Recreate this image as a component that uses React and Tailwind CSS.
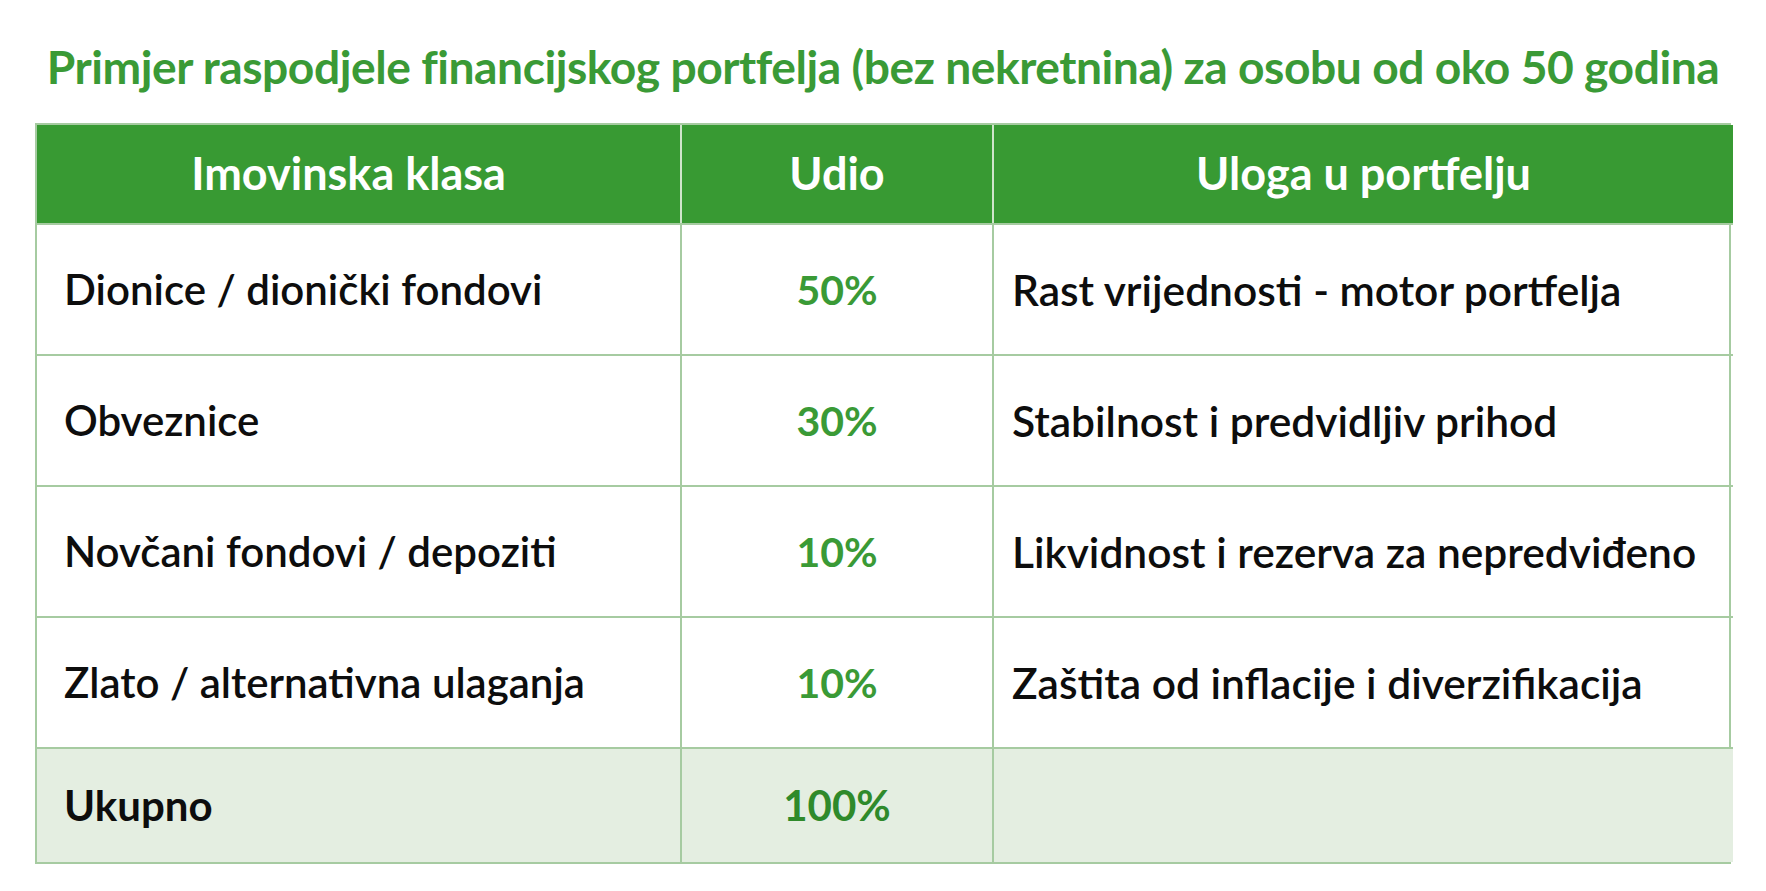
import React from "react";

const rows = [
  { a: "Dionice / dionički fondovi", b: "50%", c: "Rast vrijednosti - motor portfelja" },
  { a: "Obveznice", b: "30%", c: "Stabilnost i predvidljiv prihod" },
  { a: "Novčani fondovi / depoziti", b: "10%", c: "Likvidnost i rezerva za nepredviđeno" },
  { a: "Zlato / alternativna ulaganja", b: "10%", c: "Zaštita od inflacije i diverzifikacija" },
];

export default function App() {
  return (
    <div
      className="w-[1766px] h-[891px] bg-white flex flex-col items-center overflow-hidden"
      style={{ fontFamily: "Lato, 'Open Sans', sans-serif" }}
    >
      <h1 className="mt-[36px] h-[60px] text-[46.2px] leading-[60px] font-bold text-[#3a9a36] tracking-[-0.01em] whitespace-nowrap">
        Primjer raspodjele financijskog portfelja (bez nekretnina) za osobu od oko 50 godina
      </h1>
      <div className="mt-[27px] w-[1696px] grid grid-cols-[645px_312px_739px] border-2 border-[#a6cba1]">
        <div className="h-[98px] bg-[#389a33] flex items-center justify-center text-white text-[45px] font-bold border-r-2 border-[#cfe5cb] pr-[20px]">
          Imovinska klasa
        </div>
        <div className="h-[98px] bg-[#389a33] flex items-center justify-center text-white text-[45px] font-bold border-r-2 border-[#cfe5cb]">
          Udio
        </div>
        <div className="h-[98px] bg-[#389a33] flex items-center justify-center text-white text-[45px] font-bold">
          Uloga u portfelju
        </div>
        {rows.map((r, i) => (
          <React.Fragment key={i}>
            <div className="h-[131px] flex items-center pl-[27px] text-[42px] font-semibold text-[#0d0d0d] border-t-2 border-r-2 border-[#a6cba1]">
              {r.a}
            </div>
            <div className="h-[131px] flex items-center justify-center text-[41px] font-bold text-[#3a9a36] border-t-2 border-r-2 border-[#a6cba1]">
              {r.b}
            </div>
            <div className="h-[131px] flex items-center pl-[18px] text-[42.5px] font-semibold text-[#0d0d0d] border-t-2 border-[#a6cba1]">
              {r.c}
            </div>
          </React.Fragment>
        ))}
        <div className="h-[115px] bg-[#e4eee1] flex items-center pl-[27px] text-[42px] font-bold text-[#0d0d0d] border-t-2 border-r-2 border-[#a6cba1]">
          Ukupno
        </div>
        <div className="h-[115px] bg-[#e4eee1] flex items-center justify-center text-[42px] font-bold text-[#2f8a2b] border-t-2 border-r-2 border-[#a6cba1]">
          100%
        </div>
        <div className="h-[115px] bg-[#e4eee1] border-t-2 border-[#a6cba1]"></div>
      </div>
    </div>
  );
}
